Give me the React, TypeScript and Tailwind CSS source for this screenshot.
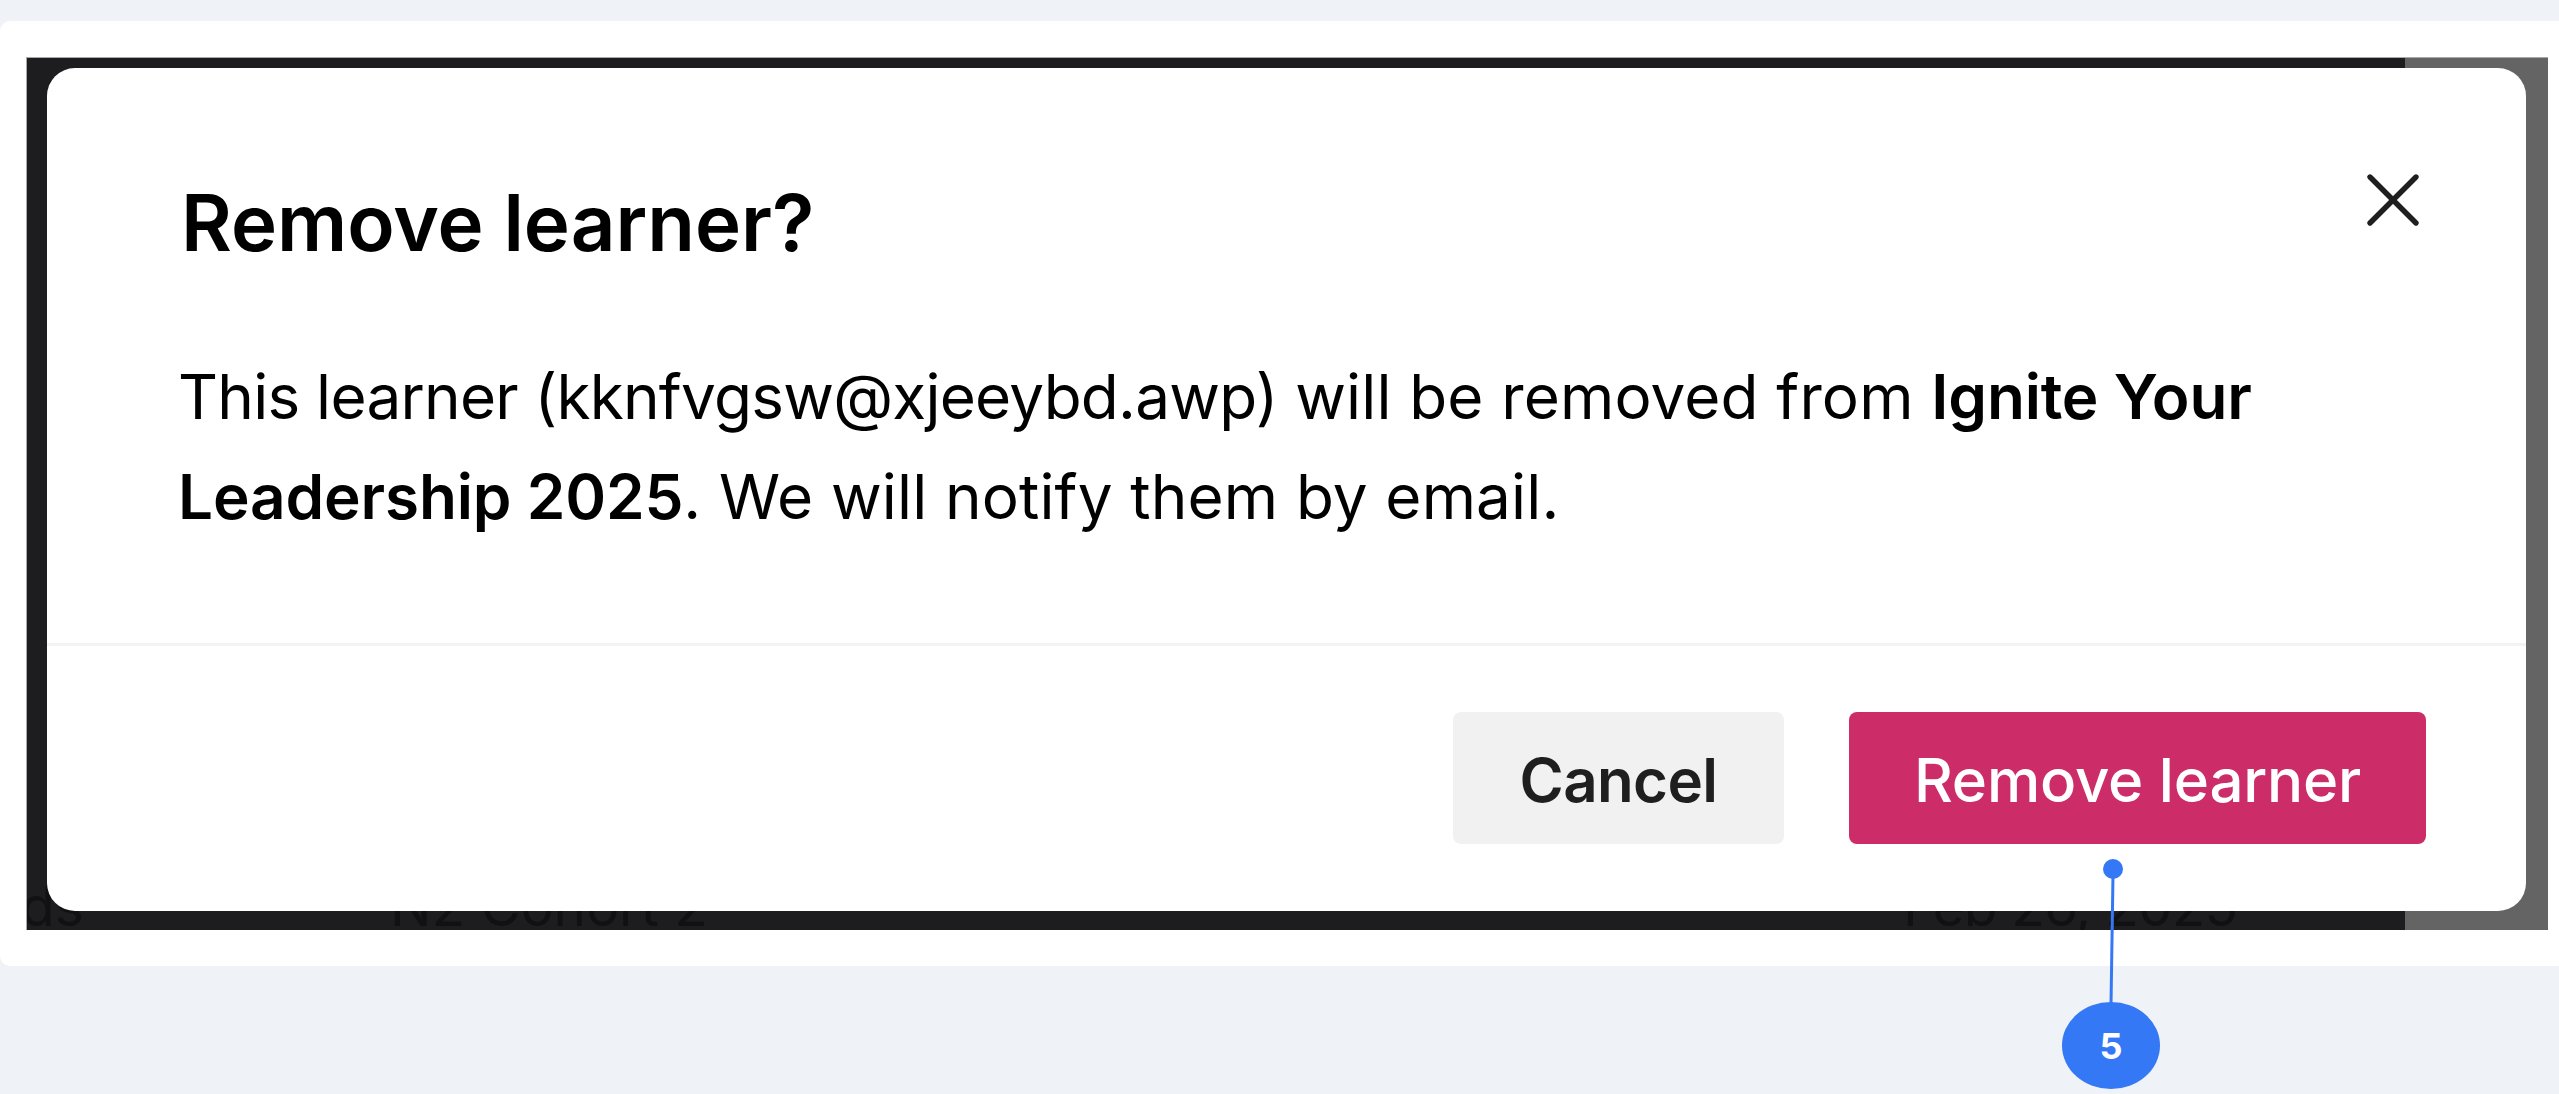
import { X } from 'lucide-react'

export default function App() {
  return (
    <div className="relative h-[1094px] overflow-hidden bg-[#eff2f7] pt-[21px] font-['Inter',sans-serif]">
      {/* page card */}
      <div className="h-[945px] rounded-l-[10px] bg-white pl-[26px] pr-[11px] pt-[36px]">
        <div className="relative flex h-[873px] overflow-hidden border-l border-t border-[#a8a8a8]">
          <div className="flex w-[2378px] items-end bg-[#1d1d20] text-[55px] leading-[72px] text-[#111114]">
            <span className="relative top-[12px] -ml-[6px] w-[369px]">ds</span>
            <span className="relative top-[12px] w-[1513px]">N2 Cohort 2</span>
            <span className="relative top-[12px] tracking-[-0.8px]">Feb 26, 2025</span>
          </div>
          <div className="flex-1 bg-[#646464]"></div>

          {/* dialog */}
          <div className="absolute left-[20px] top-[10px] flex h-[843px] w-[2479px] flex-col rounded-[28px] bg-white text-black">
            <div className="flex-1 pl-[134px] pr-[87px]">
              <div className="flex items-start justify-between pt-[110px]">
                <h2 className="text-[78px] font-semibold leading-[90px]">Remove learner?</h2>
                <X className="-mt-[24px] h-[92px] w-[92px] text-[#1f1f1f]" strokeWidth={1.4} />
              </div>
              <p className="-ml-[3px] mt-[79px] text-[62px] leading-[100px] tracking-[0.15px]">
                <span className="tracking-[-0.75px]">This learner (kknfvgsw@xjeeybd.awp)</span> will be removed from <b className="font-semibold tracking-[-0.15px]">Ignite Your Leadership 2025</b>. We will notify them by email.
              </p>
            </div>
            <div className="flex h-[268px] items-start justify-end gap-[65px] border-t-[3px] border-[#f3f3f3] pr-[100px] pt-[66px]">
              <button className="flex h-[132px] w-[331px] items-center justify-center rounded-[8px] bg-[#f1f1f1] pt-[4px] text-[60px] font-semibold tracking-[-0.6px] text-[#1f1f1f]">Cancel</button>
              <button className="flex h-[132px] w-[577px] items-center justify-center rounded-[8px] bg-[#cc2d69] pt-[4px] text-[60px] font-medium tracking-[-0.2px] text-white">Remove learner</button>
            </div>
          </div>
        </div>
      </div>

      {/* step marker */}
      <div className="absolute left-[2103px] top-[859px] h-[20px] w-[20px] rounded-full bg-[#3578f6]"></div>
      <svg className="absolute left-[2105px] top-[875px]" width="12" height="130" viewBox="0 0 12 130">
        <line x1="8" y1="0" x2="6" y2="130" stroke="#3578f6" strokeWidth="3" />
      </svg>
      <div className="absolute left-[2062px] top-[1002px] flex h-[87px] w-[98px] items-center justify-center rounded-[50%] bg-[#3578f6] text-[36px] font-bold text-white">5</div>
    </div>
  )
}
